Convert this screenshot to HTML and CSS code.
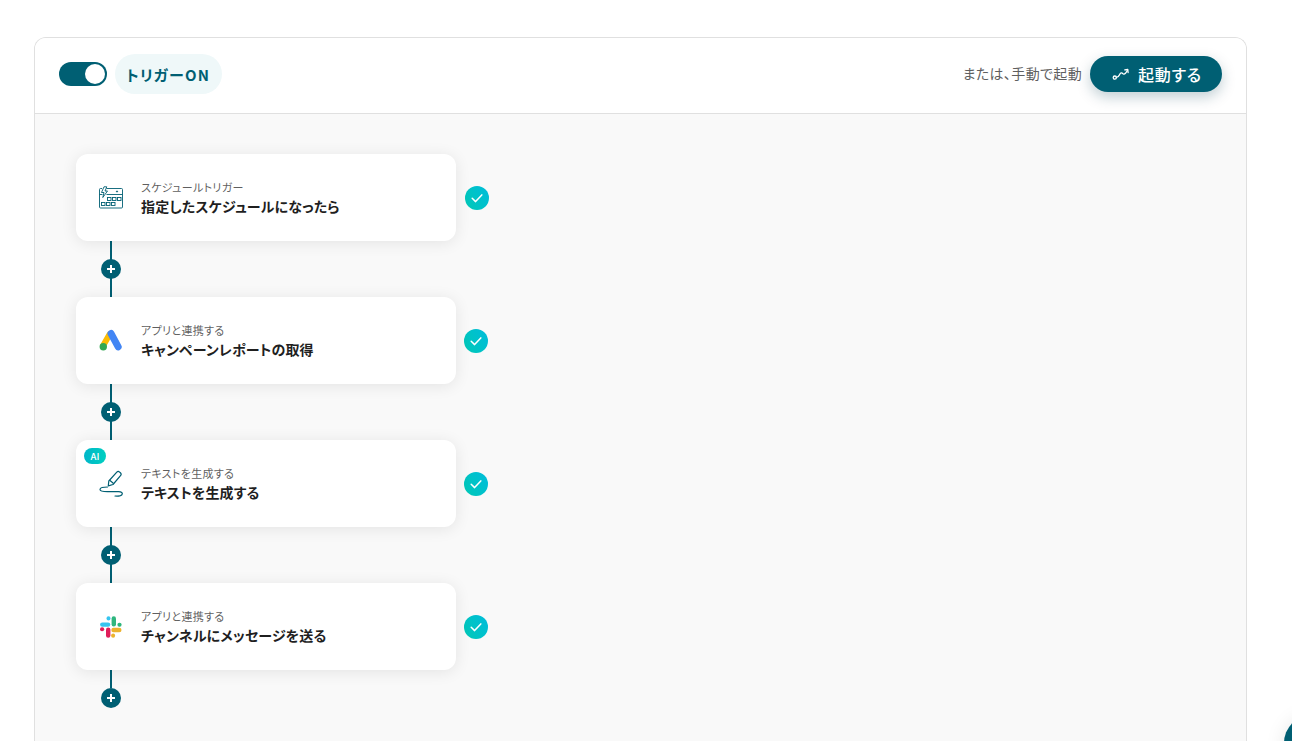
FILE: index.html
```html
<!DOCTYPE html>
<html lang="ja">
<head>
<meta charset="utf-8">
<title>フロー</title>
<link rel="stylesheet" href="styles.css">
</head>
<body>
<main class="panel">
  <header class="panel-head">
    <div class="head-left">
      <span class="toggle"><span class="knob"></span></span>
      <span class="pill">トリガーON</span>
    </div>
    <div class="head-right">
      <span class="manual">または、手動で起動</span>
      <button class="run" type="button">
        <svg class="run-icon" viewBox="0 0 18 14" width="18" height="14" fill="none" stroke="#fff" stroke-width="1.3" stroke-linecap="round" stroke-linejoin="round"><circle cx="2.800" cy="10.600" r="1.600"/><path d="M4.400 10.400c2.400-.2 2.600-1.400 3.400-3.200.7-1.600 2.200-1.600 3-.6.6.8 1.700.6 2.600-.3l2-2.600"/><path d="M12.800 2.900l3-.4.3 3"/></svg>
        <span>起動する</span>
      </button>
    </div>
  </header>
  <section class="flow">
    <div class="step">
      <article class="card">
        <span class="card-icon">
          <svg viewBox="0 0 26 24" width="26" height="24" fill="none" stroke="#005f73" stroke-width=".9"><path d="M8.500 2.500H23.500a1 1 0 0 1 1 1V21a1 1 0 0 1-1 1H2.500a1 1 0 0 1-1-1V3.500a1 1 0 0 1 1-1H4"/><path d="M1.500 8.500H4.500M8.500 8.500H24.500"/><path d="M6 .8L3.500 6.500H6L4.800 11.500L9.500 5H7L8.800 .8Z" fill="#fff"/><rect x="9.500" y="11.500" width="3.500" height="3"/><rect x="14.500" y="11.500" width="3.500" height="3"/><rect x="19.500" y="11.500" width="3.500" height="3"/><rect x="3.500" y="16.500" width="3.500" height="3"/><rect x="8.500" y="16.500" width="3.500" height="3"/><rect x="13.500" y="16.500" width="3.500" height="3"/><circle cx="19" cy="5.500" r=".6" fill="#005f73"/></svg>
        </span>
        <div class="card-text">
          <p class="kicker">スケジュールトリガー</p>
          <h2 class="title">指定したスケジュールになったら</h2>
        </div>
      </article>
      <span class="check first"><svg viewBox="0 0 14 14" width="14" height="14" fill="none" stroke="#fff" stroke-width="1.500" stroke-linecap="round" stroke-linejoin="round"><path d="M2.200 7.300L5.600 10.600L11.800 3.900"/></svg></span>
    </div>
    <div class="link"><span class="plus"></span></div>

    <div class="step">
      <article class="card">
        <span class="card-icon">
          <svg viewBox="0 0 24 24" width="24" height="24" fill="none" stroke-linecap="round"><path d="M4.500 16L10.500 5.500" stroke="#fbbc04" stroke-width="6"/><path d="M12 4.500L19.200 17.800" stroke="#4285f4" stroke-width="7"/><circle cx="4.300" cy="17.700" r="3.700" fill="#34a853"/></svg>
        </span>
        <div class="card-text">
          <p class="kicker">アプリと連携する</p>
          <h2 class="title">キャンペーンレポートの取得</h2>
        </div>
      </article>
      <span class="check"><svg viewBox="0 0 14 14" width="14" height="14" fill="none" stroke="#fff" stroke-width="1.500" stroke-linecap="round" stroke-linejoin="round"><path d="M2.200 7.300L5.600 10.600L11.800 3.900"/></svg></span>
    </div>
    <div class="link"><span class="plus"></span></div>

    <div class="step">
      <article class="card">
        <span class="ai">AI</span>
        <span class="card-icon">
          <svg viewBox="0 0 26 28" width="26" height="28" fill="none" stroke="#005f73" stroke-width="1.200" stroke-linecap="round" stroke-linejoin="round"><path d="M10.300 15.800L10.800 11L18.800 2.200a2 2 0 0 1 2.800-.1l.8.7a2 2 0 0 1 .1 2.800L15 14.500Z"/><path d="M12 10.500L15 13"/><path d="M9.500 17C5 17 2 17.500 2 19.500C2 21.500 5 21.700 9.500 21.700H20.500C23.500 21.700 25 23 24 24.600C23 26.200 20 26.200 17 26"/></svg>
        </span>
        <div class="card-text">
          <p class="kicker">テキストを生成する</p>
          <h2 class="title">テキストを生成する</h2>
        </div>
      </article>
      <span class="check"><svg viewBox="0 0 14 14" width="14" height="14" fill="none" stroke="#fff" stroke-width="1.500" stroke-linecap="round" stroke-linejoin="round"><path d="M2.200 7.300L5.600 10.600L11.800 3.900"/></svg></span>
    </div>
    <div class="link"><span class="plus"></span></div>

    <div class="step">
      <article class="card">
        <span class="card-icon">
          <svg viewBox="0.200 0 24 24" width="24" height="24" fill="none" stroke-width="4.400" stroke-linecap="round"><path d="M3.500 9.600H9.300" stroke="#36c5f0"/><path d="M9.700 3.200V3.400" stroke="#36c5f0" stroke-width="4"/><path d="M15 3.500V9.300" stroke="#2eb67d"/><path d="M20.800 9.700H20.600" stroke="#2eb67d" stroke-width="4"/><path d="M20.500 15H14.700" stroke="#ecb22e"/><path d="M14.300 20.800V20.600" stroke="#ecb22e" stroke-width="4"/><path d="M9.400 14.800V20.500" stroke="#e01e5a"/><path d="M3.200 14.300H3.400" stroke="#e01e5a" stroke-width="4"/></svg>
        </span>
        <div class="card-text">
          <p class="kicker">アプリと連携する</p>
          <h2 class="title">チャンネルにメッセージを送る</h2>
        </div>
      </article>
      <span class="check"><svg viewBox="0 0 14 14" width="14" height="14" fill="none" stroke="#fff" stroke-width="1.500" stroke-linecap="round" stroke-linejoin="round"><path d="M2.200 7.300L5.600 10.600L11.800 3.900"/></svg></span>
    </div>
    <div class="link"><span class="plus"></span></div>
  </section>
</main>
<span class="chat"></span>
</body>
</html>
```
FILE: styles.css
```css
* { box-sizing: border-box; }
html, body { height: 100%; overflow: hidden; }
body {
  margin: 0;
  padding: 37px 45px 0 34px;
  background: #fff;
  color: #1f1f1f;
  font-family: "Noto Sans CJK JP", "Noto Sans", sans-serif;
  font-feature-settings: "palt";
}
.panel {
  border: 1px solid #e0e0e0;
  border-bottom: 0;
  border-radius: 12px 12px 0 0;
  height: 704px;
  overflow: hidden;
  background: #f9f9f9;
}
.panel-head {
  height: 76px;
  padding: 0 24px 4px;
  display: flex;
  align-items: center;
  justify-content: space-between;
  background: #fff;
  border-bottom: 1px solid #e0e0e0;
}
.head-left, .head-right { display: flex; align-items: center; }
.head-left { gap: 8px; }
.head-right { gap: 8px; }
.toggle {
  width: 48px;
  height: 24px;
  border-radius: 12px;
  background: #005f73;
  display: flex;
  align-items: center;
  justify-content: flex-end;
  padding-right: 2px;
}
.knob { width: 20px; height: 20px; border-radius: 50%; background: #fff; }
.pill {
  height: 40px;
  padding: 0 12px 0 11px;
  border-radius: 20px;
  background: #eff8f9;
  color: #005f73;
  font-size: 15px;
  font-weight: 700;
  line-height: 41px;
  letter-spacing: 1.200px;
}
.manual { font-size: 14px; letter-spacing: .35px; color: #5f5f5f; position: relative; top: -1px; }
.run {
  width: 132px;
  height: 36px;
  border: 0;
  padding: 0 0 0 2px;
  border-radius: 18px;
  background: #005f73;
  color: #fff;
  font: 500 16px "Noto Sans CJK JP", sans-serif;
  font-feature-settings: "palt";
  letter-spacing: .8px;
  display: flex;
  align-items: center;
  justify-content: center;
  gap: 8px;
  box-shadow: 0 5px 14px rgba(0, 60, 80, .25);
}
.flow { padding: 40px 0 0 41px; display: flex; flex-direction: column; }
.step { display: flex; align-items: center; gap: 8px; }
.card {
  position: relative;
  width: 380px;
  height: 87px;
  border-radius: 12px;
  background: #fff;
  box-shadow: 0 2px 16px rgba(0, 0, 0, .09);
  display: flex;
  align-items: center;
  padding: 0 0 0 21px;
  gap: 16px;
}
.card-icon { width: 28px; display: flex; justify-content: center; align-items: center; flex: none; }
.kicker { margin: 0 0 1px; font-size: 11px; line-height: 16px; letter-spacing: .33px; color: #5f5f5f; }
.title { margin: 0; font-size: 14px; line-height: 20px; letter-spacing: .15px; font-weight: 700; color: #1f1f1f; }
.ai {
  position: absolute;
  left: 8px;
  top: 8px;
  width: 22px;
  height: 16px;
  border-radius: 8px;
  background: linear-gradient(90deg, #00b6c9, #00cfc0);
  color: #fff;
  font-size: 9.500px;
  font-weight: 500;
  line-height: 16px;
  text-align: center;
}
.check {
  width: 24px;
  height: 24px;
  border-radius: 50%;
  background: linear-gradient(60deg, #00c9b5, #00bcdc);
  display: flex;
  align-items: center;
  justify-content: center;
}
.check.first { margin-left: 1px; }
.link {
  width: 70px;
  height: 56px;
  display: flex;
  align-items: center;
  justify-content: center;
  background: linear-gradient(#005f73, #005f73) center / 2px 100% no-repeat;
}
.plus {
  width: 20px;
  height: 20px;
  border-radius: 50%;
  background:
    linear-gradient(#fff, #fff) center / 8px 2px no-repeat,
    linear-gradient(#fff, #fff) center / 2px 8px no-repeat,
    #005f73;
}
.step + .link:last-child { height: 38px; align-items: flex-end; background-size: 2px 18px; background-position: top; }
.chat {
  position: fixed;
  left: 1284px;
  top: 715px;
  width: 56px;
  height: 56px;
  border-radius: 50%;
  background: #005f73;
  box-shadow: 0 2px 20px rgba(0, 0, 0, .1);
}
```
